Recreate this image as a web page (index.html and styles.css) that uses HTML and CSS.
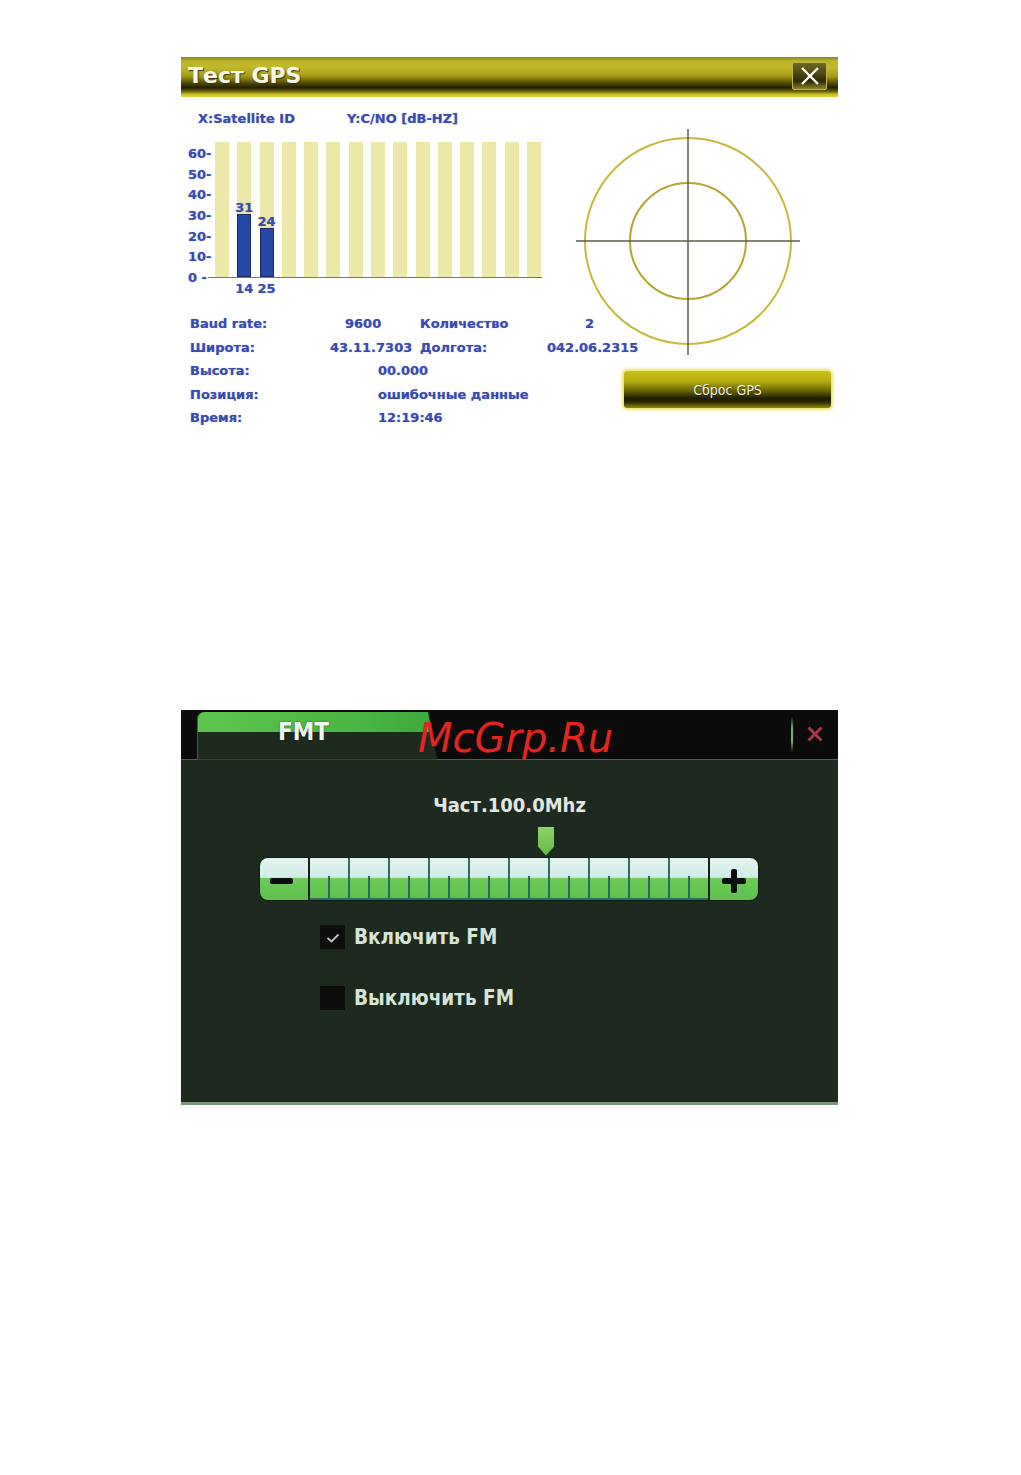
FILE: index.html
```html
<!DOCTYPE html>
<html lang="ru">
<head>
<meta charset="utf-8">
<title>Тест GPS / FMT</title>
<link rel="stylesheet" href="styles.css">
</head>
<body>
<main class="page">
  <section class="gps">
    <header class="gps-title">
      <h1>Тест GPS</h1>
      <button class="gps-close" aria-label="Закрыть">
        <svg viewBox="0 0 20 18" width="20" height="18"><path d="M2 1 L18 17 M18 1 L2 17" stroke="#ffffff" stroke-width="2.4" fill="none"/></svg>
      </button>
    </header>
    <div class="gps-body">
      <div class="chart">
        <div class="chart-head"><span>X:Satellite ID</span><span>Y:C/NO [dB-HZ]</span></div>
        <div class="chart-main">
          <div class="y-axis">
            <span>60-</span><span>50-</span><span>40-</span><span>30-</span><span>20-</span><span>10-</span><span>0 -</span>
          </div>
          <div class="plot-col">
            <div class="plot">
              <div class="slot"></div>
              <div class="slot"><span class="val">31</span><div class="bar" style="height:63.5px"></div></div>
              <div class="slot"><span class="val">24</span><div class="bar" style="height:49px"></div></div>
              <div class="slot"></div>
              <div class="slot"></div>
              <div class="slot"></div>
              <div class="slot"></div>
              <div class="slot"></div>
              <div class="slot"></div>
              <div class="slot"></div>
              <div class="slot"></div>
              <div class="slot"></div>
              <div class="slot"></div>
              <div class="slot"></div>
              <div class="slot"></div>
            </div>
            <div class="x-axis">
              <span></span><span>14</span><span>25</span><span></span><span></span><span></span><span></span><span></span><span></span><span></span><span></span><span></span><span></span><span></span><span></span>
            </div>
          </div>
        </div>
      </div>
      <svg class="radar" width="224" height="226" viewBox="0 0 224 226">
        <circle cx="112" cy="112" r="103" fill="none" stroke="#c4b93a" stroke-width="2"/>
        <circle cx="112" cy="112" r="58" fill="none" stroke="#b3a72e" stroke-width="2"/>
        <line x1="0" y1="112" x2="224" y2="112" stroke="#615b45" stroke-width="1.5"/>
        <line x1="112" y1="0" x2="112" y2="226" stroke="#615b45" stroke-width="1.5"/>
      </svg>
      <div class="info">
        <span>Baud rate:</span><span class="c-val pad-a">9600</span><span>Количество</span><span class="pad-b">2</span>
        <span>Широта:</span><span class="c-val">43.11.7303</span><span>Долгота:</span><span>042.06.2315</span>
        <span>Высота:</span><span class="c-long">00.000</span>
        <span>Позиция:</span><span class="c-long">ошибочные данные</span>
        <span>Время:</span><span class="c-long">12:19:46</span>
      </div>
      <button class="reset">Сброс GPS</button>
    </div>
  </section>

  <section class="fm">
    <div class="fm-top">
      <div class="fm-tab">FMT</div>
      <span class="fm-sep"></span>
      <button class="fm-close" aria-label="Закрыть">
        <svg viewBox="0 0 16 16" width="16" height="16"><path d="M1.5 1.5 L14.5 14.5 M14.5 1.5 L1.5 14.5" stroke="#c2414e" stroke-width="3" fill="none"/></svg>
      </button>
    </div>
    <div class="fm-body">
      <div class="freq">Част.100.0Mhz</div>
      <div class="tuner">
        <div class="marker-row"><span class="marker" style="margin-left:278px"></span></div>
        <div class="slider">
          <button class="step minus" aria-label="-"></button>
          <div class="scale">
            <span class="seg"></span><span class="seg"></span><span class="seg"></span><span class="seg"></span><span class="seg"></span>
            <span class="seg"></span><span class="seg"></span><span class="seg"></span><span class="seg"></span><span class="seg"></span>
          </div>
          <button class="step plus" aria-label="+"></button>
        </div>
      </div>
      <ul class="options">
        <li><span class="check"><svg viewBox="0 0 14 10" width="14" height="10"><polyline points="1.5,5 5.5,8.5 12.5,1.5" fill="none" stroke="#b9c9b9" stroke-width="1.8"/></svg></span>Включить FM</li>
        <li><span class="check"></span>Выключить FM</li>
      </ul>
    </div>
    <span class="watermark">McGrp.Ru</span>
  </section>
</main>
</body>
</html>
```
FILE: styles.css
```css
* { box-sizing: border-box; }
html, body { margin: 0; background: #ffffff; }
body { font-family: "DejaVu Sans", sans-serif; }

.page { padding: 57px 0 0 181px; width: 838px; }

/* ---------- GPS window ---------- */
.gps { width: 657px; }

.gps-title {
  display: flex;
  height: 40px;
  background: linear-gradient(to bottom, #8a8418 0%, #bab32a 10%, #c2ba2c 25%, #a39b16 48%, #4c4603 66%, #221e00 77%, #6a6408 86%, #cdc527 94%, #dcd43a 100%);
}
.gps-title h1 {
  flex: 1;
  margin: 0;
  padding-left: 7px;
  font: bold 22px/37px "DejaVu Sans", sans-serif;
  color: #f6f6ea;
  text-shadow: 1px 1px 1px #3a3400;
}
.gps-close {
  display: flex;
  align-items: center;
  justify-content: center;
  width: 35px;
  height: 28px;
  margin: 5px 11px 0 0;
  padding: 0;
  border: 1px solid #bdb552;
  border-radius: 2px;
  background: linear-gradient(to bottom, #6f6822 0%, #4a4410 45%, #2c2804 70%, #8c8424 100%);
}

.gps-body {
  display: grid;
  grid-template-columns: 395px 262px;
  font: bold 13px "DejaVu Sans", sans-serif;
  color: #3a4bb0;
  text-shadow: 0 0 1px rgba(58, 75, 176, .55);
}

.chart { grid-column: 1; grid-row: 1; padding-left: 7px; }
.chart-head {
  display: grid;
  grid-template-columns: 149px auto;
  margin: 14px 0 0 10px;
  line-height: 16px;
}
.chart-main { display: flex; margin-top: 15px; }
.y-axis {
  display: flex;
  flex-direction: column;
  justify-content: space-between;
  width: 20px;
  height: 138px;
  margin-top: 5px;
  line-height: 14px;
  white-space: nowrap;
}
.plot {
  display: flex;
  justify-content: space-between;
  align-items: flex-end;
  width: 334px;
  height: 136px;
  padding: 0 1px 0 7px;
  border-bottom: 1px solid #857c3c;
}
.slot {
  display: flex;
  flex-direction: column;
  justify-content: flex-end;
  width: 14px;
  height: 135px;
  background: #ebe8a8;
}
.val { display: flex; justify-content: center; line-height: 13px; white-space: nowrap; }
.bar { background: #2448a6; box-shadow: inset 0 0 0 1px #1a2864; }
.x-axis {
  display: flex;
  justify-content: space-between;
  width: 334px;
  margin-top: 4px;
  padding: 0 1px 0 7px;
  line-height: 14px;
}
.x-axis span { display: flex; justify-content: center; width: 14px; white-space: nowrap; }

.radar { grid-column: 2; grid-row: 1 / 3; align-self: start; margin-top: 32px; }

.info {
  grid-column: 1 / 3;
  grid-row: 2;
  display: grid;
  grid-template-columns: 140px 48px 42px 127px auto;
  padding: 16px 0 10px 9px;
  line-height: 23.5px;
  white-space: nowrap;
}
.c-val { grid-column: 2 / 4; }
.c-long { grid-column: 3 / 6; }
.pad-a { padding-left: 15px; }
.pad-b { padding-left: 38px; }

.reset {
  grid-column: 2;
  grid-row: 2;
  align-self: start;
  justify-self: end;
  width: 207px;
  height: 37px;
  margin: 75px 7px 0 0;
  border: 0;
  border-radius: 3px;
  background: linear-gradient(to bottom, #cbc418 0%, #b4ac0e 28%, #6e6800 52%, #1f1c00 74%, #2b2800 84%, #8e8812 100%);
  box-shadow: 0 0 3px 2px #ece46a;
  color: #f2f2e6;
  font: 14px "DejaVu Sans Condensed", "DejaVu Sans", sans-serif;
  font-stretch: condensed;
  text-shadow: 0 1px 1px #222200;
}

/* ---------- FMT window ---------- */
.fm {
  position: relative;
  width: 657px;
  margin-top: 270px;
  font-family: "DejaVu Sans Condensed", "DejaVu Sans", sans-serif;
  font-stretch: condensed;
  font-weight: bold;
}
.fm-top {
  display: flex;
  align-items: center;
  height: 50px;
  padding-left: 16px;
  background: #0b0b0b;
  border-bottom: 1px solid #4b654b;
}
.fm-tab {
  align-self: flex-end;
  width: 240px;
  height: 48px;
  margin-bottom: -1px;
  padding: 6px 0 0 81px;
  border-radius: 7px 7px 0 0;
  clip-path: polygon(0 0, 231px 0, 100% 100%, 0 100%);
  background:
    linear-gradient(to bottom, rgba(0,0,0,0) 20px, #1f2a1f 20px),
    linear-gradient(to right, #5cc54c, #48b642 70%, #3ba83a);
  box-shadow: inset 1px 0 0 #3f583f;
  color: #eef4ee;
  font-size: 24px;
  line-height: 28px;
  text-shadow: 0 0 2px rgba(0,0,0,.6);
}
.fm-sep {
  width: 2px;
  height: 35px;
  margin-left: auto;
  background: linear-gradient(to bottom, rgba(90,170,90,0), #66b866 30%, #66b866 70%, rgba(90,170,90,0));
}
.fm-close {
  display: flex;
  width: 16px;
  height: 16px;
  margin: 0 15px 0 14px;
  padding: 0;
  border: 0;
  background: none;
  opacity: .85;
}

.fm-body {
  height: 345px;
  padding-top: 33px;
  background: #1e2a1f;
  border-bottom: 3px solid #7c987c;
}
.freq {
  text-align: center;
  font-size: 20px;
  line-height: 24px;
  color: #e4e6e4;
}
.tuner { width: 498px; margin: 10px 0 0 79px; }
.marker-row { height: 29px; }
.marker {
  display: block;
  width: 16px;
  height: 29px;
  clip-path: polygon(0 0, 100% 0, 100% 70%, 50% 100%, 0 70%);
  background: linear-gradient(to bottom, #8cd466, #64ba48);
}
.slider {
  display: flex;
  height: 42px;
  margin-top: 2px;
  border-radius: 8px;
  overflow: hidden;
  background: #142214;
  box-shadow: 0 0 0 1px #111a11;
}
.step, .seg {
  background: linear-gradient(to bottom, #e4f5f1 0%, #d0ebe5 46%, #6ccb58 49%, #5fc04d 100%);
}
.step {
  display: grid;
  place-items: center;
  width: 48px;
  height: 42px;
  padding: 0;
  border: 0;
}
.step::before, .step::after {
  content: "";
  grid-area: 1 / 1;
  background: #0c0c0c;
  border-radius: 2px;
}
.minus::before { width: 23px; height: 6px; margin-top: 4px; margin-right: 5px; }
.minus::after { display: none; }
.plus::before { width: 24px; height: 6px; margin-top: 4px; }
.plus::after { width: 6px; height: 24px; margin-top: 4px; }
.scale {
  display: flex;
  width: 398px;
  margin: 0 2px;
}
.seg {
  flex: 1;
  display: flex;
  justify-content: center;
  align-items: flex-end;
  padding-bottom: 2px;
  box-shadow: inset 0 -2px 0 #2d6f60;
}
.seg + .seg { border-left: 2px solid #2b6a5c; }
.seg::after { content: ""; width: 2px; height: 22px; background: #2b6a5c; }

.options { margin: 25px 0 0; padding: 0 0 0 139px; list-style: none; }
.options li {
  display: flex;
  align-items: center;
  gap: 9px;
  height: 24px;
  font-size: 20.5px;
  color: #d6e4d6;
}
.options li + li { margin-top: 37px; }
.check {
  display: flex;
  align-items: center;
  justify-content: center;
  width: 25px;
  height: 24px;
  padding-top: 3px;
  background: #0d0d0d;
}

.watermark {
  position: absolute;
  left: 237px;
  top: 5px;
  font: oblique normal 40px/46px "DejaVu Sans", sans-serif;
  font-stretch: normal;
  color: #e4241f;
  pointer-events: none;
}
```
